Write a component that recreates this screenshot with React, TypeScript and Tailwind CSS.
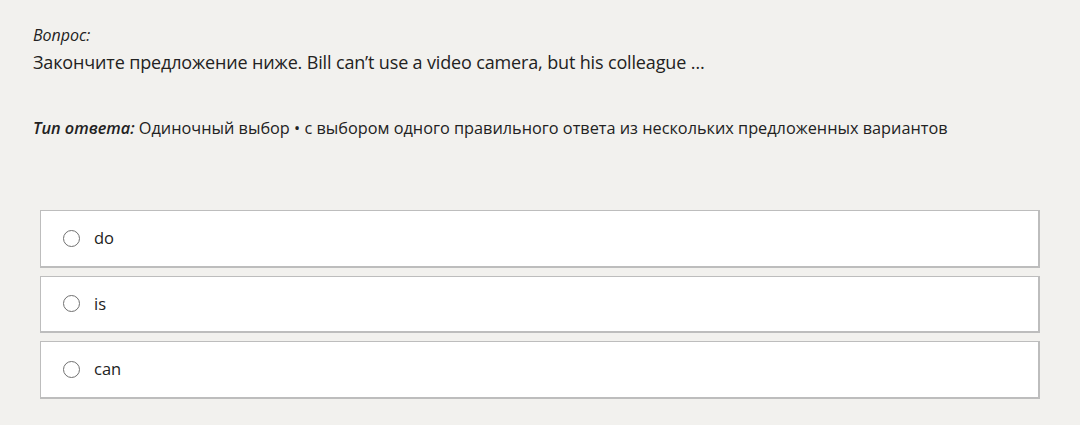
import React from "react";

const options = ["do", "is", "can"];

const App: React.FC = () => {
  return (
    <div
      className="w-[1080px] h-[425px] bg-[#f2f1ee] text-[#222] overflow-hidden"
      style={{ fontFamily: '"Open Sans", "Noto Sans", sans-serif' }}
    >
      <div className="pl-[33px] pt-[25px]">
        <div className="italic text-[16px] leading-[20px]">Вопрос:</div>
        <div className="text-[18px] leading-[24px] mt-[5px] tracking-[-0.15px]">
          Закончите предложение ниже. Bill can’t use a video camera, but his colleague …
        </div>
        <div className="text-[16.3px] leading-[22px] mt-[43px]">
          <span className="italic font-semibold">Тип ответа:</span> Одиночный выбор • с выбором
          одного правильного ответа из нескольких предложенных вариантов
        </div>
      </div>
      <div className="ml-[40px] w-[1000px] mt-[71px] flex flex-col gap-[8px]">
        {options.map((o) => (
          <label
            key={o}
            className="h-[57.5px] bg-white border border-[#bdbdbd] border-b-2 border-r-2 flex items-center pl-[22px]"
          >
            <span className="w-[17px] h-[17px] rounded-full border border-[#707070] bg-white" />
            <span className="ml-[14px] text-[16.5px] leading-[20px]">{o}</span>
          </label>
        ))}
      </div>
    </div>
  );
};

export default App;
